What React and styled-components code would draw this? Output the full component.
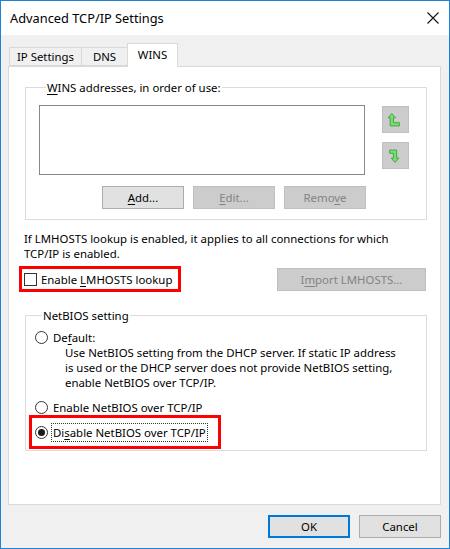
import styled, { createGlobalStyle } from "styled-components";

const Global = createGlobalStyle`
  html, body { margin: 0; padding: 0; background: #fff; }
  body {
    font-family: "Noto Sans", "Liberation Sans", sans-serif;
    font-size: 11.4px;
    color: #000;
  }
  * { box-sizing: border-box; }
`;

const Window = styled.div`
  width: 450px;
  height: 549px;
  border: 1px solid #1c84d8;
  display: flex;
  flex-direction: column;
  background: #f0f0f0;
`;

const TitleBar = styled.div`
  height: 34px;
  background: #fff;
  display: flex;
  align-items: center;
  justify-content: space-between;
  padding: 0 10px 0 9px;
  font-size: 12.8px;
`;

const Body = styled.div`
  flex: 1;
  display: flex;
  flex-direction: column;
  padding: 8px 8px 10px 7px;
`;

const TabStrip = styled.div`
  height: 23px;
  display: flex;
  align-items: flex-end;
  padding-left: 1px;
  position: relative;
  z-index: 1;
`;

const Tab = styled.div`
  width: ${(p) => p.$w}px;
  height: ${(p) => (p.$active ? "24px" : "19px")};
  margin-bottom: ${(p) => (p.$active ? "-1px" : "0")};
  padding-top: ${(p) => (p.$active ? "3px" : "1px")};
  margin-left: ${(p) => (p.$first ? "0" : "-1px")};
  border: 1px solid #d9d9d9;
  border-bottom: ${(p) => (p.$active ? "none" : "1px solid #d9d9d9")};
  background: ${(p) => (p.$active ? "#fff" : "#f0f0f0")};
  line-height: 15px;
  text-align: center;
  white-space: nowrap;
`;

const Panel = styled.div`
  flex: 1;
  background: #fff;
  border: 1px solid #d9d9d9;
  padding: 0 14px 0 15px;
  display: flex;
  flex-direction: column;
`;

const Group = styled.fieldset`
  margin: ${(p) => p.$top}px -1px 0 1px;
  padding: ${(p) => p.$pad};
  border: 1px solid #dcdcdc;
  min-width: 0;
`;

const Legend = styled.legend`
  margin-left: 7px;
  padding: 0 1px;
  line-height: 15px;
`;

const Key = styled.span`
  text-decoration: underline;
  text-underline-offset: 2px;
`;

const ListRow = styled.div`
  display: flex;
  gap: 17px;
`;

const ListBox = styled.div`
  width: 326px;
  height: 70px;
  border: 1px solid #828790;
  background: #fff;
`;

const MoveColumn = styled.div`
  display: flex;
  flex-direction: column;
  gap: 9px;
  padding-top: 1px;
`;

const IconButton = styled.div`
  width: 27px;
  height: 27px;
  background: #cccccc;
  border: 1px solid #bfbfbf;
  display: flex;
  align-items: center;
  justify-content: center;
  padding-right: 2px;
`;

const ButtonRow = styled.div`
  display: flex;
  justify-content: flex-end;
  gap: 9px;
  margin-top: ${(p) => p.$top || 0}px;
  padding-right: ${(p) => p.$right || 0}px;
`;

const Button = styled.div`
  width: ${(p) => p.$w || 82}px;
  height: 23px;
  display: flex;
  align-items: center;
  justify-content: center;
  line-height: 15px;
  background: ${(p) => (p.$disabled ? "#cccccc" : "#e1e1e1")};
  border: 1px solid ${(p) => (p.$default ? "#0078d7" : p.$disabled ? "#bfbfbf" : "#adadad")};
  box-shadow: ${(p) => (p.$default ? "inset 0 0 0 1px #0078d7" : "none")};
  color: ${(p) => (p.$disabled ? "#838383" : "#000")};
`;

const Note = styled.p`
  margin: 11px 0 0;
  line-height: 15px;
`;

const LookupRow = styled.div`
  margin-top: 5px;
  display: flex;
  align-items: center;
  justify-content: space-between;
`;

const Marked = styled.div`
  border: 3px solid #ff0000;
  display: flex;
  align-items: center;
  gap: ${(p) => p.$gap || 4}px;
  width: fit-content;
  height: ${(p) => p.$h}px;
  padding: 0 ${(p) => p.$r}px 0 ${(p) => p.$l}px;
  margin-left: ${(p) => p.$ml}px;
  line-height: 15px;
`;

const CheckBox = styled.span`
  width: 13px;
  height: 13px;
  border: 1px solid #333;
  background: #fff;
  flex: none;
`;

const Radio = styled.span`
  width: 13px;
  height: 13px;
  border: 1px solid #333;
  border-radius: 50%;
  background: #fff;
  flex: none;
  display: flex;
  align-items: center;
  justify-content: center;
  &::after {
    content: "";
    width: 7px;
    height: 7px;
    border-radius: 50%;
    background: ${(p) => (p.$on ? "#1a1a1a" : "transparent")};
  }
`;

const Option = styled.div`
  display: flex;
  align-items: center;
  gap: 5px;
  line-height: 15px;
  margin-top: ${(p) => p.$top || 0}px;
`;

const Description = styled.div`
  padding-left: 30px;
  line-height: 15px;
`;

const Focus = styled.span`
  outline: 1px dotted #333;
  outline-offset: 1px;
`;

const UpIcon = () => (
  <svg width="13" height="14" viewBox="0 0 12 13">
    <polygon
      points="3.5,0.5 7,4.5 5,4.5 5,9 10.5,9 10.5,12 2,12 2,4.5 0,4.5"
      fill="#74e074"
      stroke="#35a035"
      strokeWidth="0.8"
    />
  </svg>
);

const DownIcon = () => (
  <svg width="13" height="14" viewBox="0 0 12 13">
    <polygon
      points="1.5,1 8,1 8,8.5 10,8.5 6.5,12.5 3,8.5 5,8.5 5,4 1.5,4"
      fill="#74e074"
      stroke="#35a035"
      strokeWidth="0.8"
    />
  </svg>
);

const CloseIcon = () => (
  <svg width="12" height="12" viewBox="0 0 12 12">
    <path d="M0.5 0.5 L11.5 11.5 M11.5 0.5 L0.5 11.5" stroke="#111" strokeWidth="1.1" />
  </svg>
);

export default function App() {
  return (
    <Window>
      <Global />
      <TitleBar>
        <span>Advanced TCP/IP Settings</span>
        <CloseIcon />
      </TitleBar>
      <Body>
        <TabStrip>
          <Tab $first $w={73}>IP Settings</Tab>
          <Tab $w={47}>DNS</Tab>
          <Tab $active $w={51}>WINS</Tab>
        </TabStrip>
        <Panel>
          <Group $top={13} $pad="10px 16px 10px 13px">
            <Legend>
              <Key>W</Key>INS addresses, in order of use:
            </Legend>
            <ListRow>
              <ListBox />
              <MoveColumn>
                <IconButton>
                  <UpIcon />
                </IconButton>
                <IconButton>
                  <DownIcon />
                </IconButton>
              </MoveColumn>
            </ListRow>
            <ButtonRow $top={11} $right={44}>
              <Button>
                <span>
                  <Key>A</Key>dd...
                </span>
              </Button>
              <Button $disabled>
                <span>
                  <Key>E</Key>dit...
                </span>
              </Button>
              <Button $disabled>
                <span>
                  Remo<Key>v</Key>e
                </span>
              </Button>
            </ButtonRow>
          </Group>

          <Note>
            If LMHOSTS lookup is enabled, it applies to all connections for which
            <br />
            TCP/IP is enabled.
          </Note>

          <LookupRow>
            <Marked $h={26} $l={2} $r={6} $ml={-5}>
              <CheckBox />
              <span>
                Enable <Key>L</Key>MHOSTS lookup
              </span>
            </Marked>
            <Button $disabled $w={149}>
              <span>
                I<Key>m</Key>port LMHOSTS...
              </span>
            </Button>
          </LookupRow>

          <Group $top={16} $pad="7px 8px 1px 9px">
            <Legend>NetBIOS setting</Legend>
            <Option>
              <Radio />
              <span>
                De<Key>f</Key>ault:
              </span>
            </Option>
            <Description>
              Use NetBIOS setting from the DHCP server. If static IP address
              <br />
              is used or the DHCP server does not provide NetBIOS setting,
              <br />
              enable NetBIOS over TCP/IP.
            </Description>
            <Option $top={10}>
              <Radio />
              <span>Enable NetBIOS over TCP/IP</span>
            </Option>
            <Marked $h={34} $l={3} $r={12} $ml={-6} $gap={5}>
              <Radio $on />
              <Focus>
                Di<Key>s</Key>able NetBIOS over TCP/IP
              </Focus>
            </Marked>
          </Group>
        </Panel>
        <ButtonRow $top={10}>
          <Button $default>OK</Button>
          <Button>Cancel</Button>
        </ButtonRow>
      </Body>
    </Window>
  );
}
